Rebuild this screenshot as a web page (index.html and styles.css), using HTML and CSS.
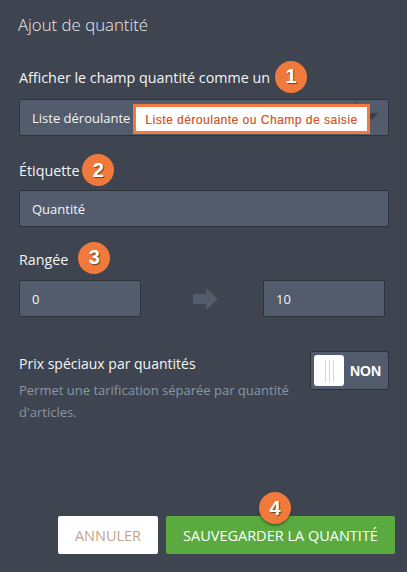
FILE: index.html
```html
<!DOCTYPE html>
<html lang="fr">
<head>
<meta charset="utf-8">
<link rel="stylesheet" href="styles.css">
</head>
<body>
<div class="panel">
  <h1 class="title">Ajout de quantité</h1>

  <div class="label-row row1">
    <span class="label">Afficher le champ quantité comme un</span>
    <span class="badge">1</span>
  </div>
  <div class="select">
    <span class="select-text">Liste déroulante</span>
    <span class="select-btn"><span class="caret"></span></span>
    <div class="tip">Liste déroulante ou Champ de saisie</div>
  </div>

  <div class="label-row row2">
    <span class="label">Étiquette</span>
    <span class="badge">2</span>
  </div>
  <div class="input">Quantité</div>

  <div class="label-row row3">
    <span class="label">Rangée</span>
    <span class="badge">3</span>
  </div>
  <div class="range">
    <div class="input small">0</div>
    <svg class="arrow" width="26" height="22" viewBox="0 0 26 22"><path d="M0 6 H13 V0 L25 11 L13 22 V16 H0 Z" fill="#525c6d"/></svg>
    <div class="input small">10</div>
  </div>

  <div class="special">
    <div class="special-text">
      <div class="special-title">Prix spéciaux par quantités</div>
      <div class="special-desc">Permet une tarification séparée par quantité d'articles.</div>
    </div>
    <div class="toggle">
      <span class="knob"><i></i><i></i><i></i></span>
      <span class="toggle-text">NON</span>
    </div>
  </div>

  <div class="actions">
    <button class="btn cancel">ANNULER</button>
    <button class="btn save">SAUVEGARDER LA QUANTITÉ<span class="badge badge4">4</span></button>
  </div>
</div>
</body>
</html>
```
FILE: styles.css
```css
* { box-sizing: border-box; }
html, body { margin: 0; padding: 0; }
body {
  width: 407px;
  height: 572px;
  background: #3e4550;
  font-family: "Open Sans", "Noto Sans", sans-serif;
  color: #f2f2f2;
  overflow: hidden;
}
.panel {
  display: flex;
  flex-direction: column;
  padding: 0 18px 0 19px;
}
.title {
  margin: 13px 0 0 -1px;
  font-size: 16.8px;
  font-weight: 300;
  line-height: 24px;
  color: #e6e8ea;
}
.label-row {
  display: flex;
  align-items: center;
  height: 32px;
}
.row1 { margin-top: 24px; }
.row2 { margin-top: 18px; }
.row3 { margin-top: 16px; }
.label {
  font-size: 14.3px;
  color: #f4f4f4;
}
.badge {
  width: 32px;
  height: 32px;
  border-radius: 50%;
  background: #f07a3b;
  color: #fff;
  font-family: "Liberation Sans", Arial, sans-serif;
  font-weight: bold;
  font-size: 20px;
  display: flex;
  align-items: center;
  justify-content: center;
  text-shadow: 1px 1px 1px #6a4030;
  flex: none;
}
.row1 .badge { margin-left: 5px; margin-top: -1px; }
.row2 .badge { margin-left: 3px; }
.row3 .badge { margin-left: 10px; margin-top: -3px; }
.select {
  position: relative;
  margin-top: 6px;
  height: 37px;
  background: #525c6d;
  border: 1px solid #2d323a;
  border-radius: 2px;
  display: flex;
  align-items: center;
}
.select-text {
  flex: 1;
  padding-left: 12px;
  font-size: 13px;
  color: #f4f4f4;
}
.select-btn {
  width: 33px;
  align-self: stretch;
  border-left: 1px solid #434a55;
  display: flex;
  align-items: center;
  justify-content: center;
}
.caret {
  width: 0; height: 0;
  border-left: 6px solid transparent;
  border-right: 6px solid transparent;
  border-top: 7px solid #3a3f48;
  margin-top: -2px;
}
.tip {
  position: absolute;
  left: 113px;
  top: 4px;
  width: 237px;
  height: 30px;
  background: #fff;
  border: 3px solid #f27a3a;
  font-family: "Liberation Sans", Arial, sans-serif;
  font-size: 12px;
  color: #d9541e;
  letter-spacing: 0.5px;
  display: flex;
  align-items: center;
  justify-content: center;
  padding-top: 1px;
  text-shadow: 0.3px 0.3px 0 rgba(120,50,20,0.4);
}
.input {
  margin-top: 4px;
  height: 37px;
  background: #525c6d;
  border: 1px solid #2d323a;
  border-radius: 2px;
  padding-left: 12px;
  display: flex;
  align-items: center;
  font-size: 13px;
  color: #f4f4f4;
}
.range {
  margin-top: 5px;
  display: flex;
  align-items: center;
  justify-content: space-between;
  width: 366px;
}
.range .input { margin-top: 0; }
.small { width: 122px; }
.arrow { margin-left: 8px; margin-right: 0; }
.special {
  margin-top: 34px;
  display: flex;
  justify-content: space-between;
  align-items: flex-start;
}
.special-text { width: 290px; margin-top: 1px; }
.special-title {
  font-size: 14px;
  color: #f4f4f4;
  line-height: 24px;
}
.special-desc {
  margin-top: 3px;
  font-size: 13px;
  line-height: 22px;
  color: #8c95a2;
}
.toggle {
  width: 79px;
  height: 39px;
  background: #525c6d;
  border: 1px solid #2d323a;
  border-radius: 3px;
  display: flex;
  align-items: center;
  padding-left: 3px;
}
.knob {
  width: 30px;
  height: 31px;
  background: #fff;
  border-radius: 3px;
  display: flex;
  justify-content: center;
  align-items: center;
  gap: 3px;
}
.knob i {
  display: block;
  width: 1px;
  height: 22px;
  background: #d8d8d8;
}
.toggle-text {
  margin-left: 6px;
  font-family: "Liberation Sans", Arial, sans-serif;
  font-weight: bold;
  font-size: 14px;
  color: #fff;
}
.actions {
  margin-top: 93px;
  display: flex;
  justify-content: flex-end;
  gap: 8px;
  margin-right: -6px;
}
.btn {
  position: relative;
  height: 38px;
  border: none;
  border-radius: 2px;
  font-family: "Open Sans", "Noto Sans", sans-serif;
  font-size: 14.5px;
  padding: 0;
}
.cancel {
  width: 100px;
  background: #fff;
  color: #c3a585;
}
.save {
  width: 229px;
  background: #5aaa40;
  color: #fff;
}
.badge4 {
  position: absolute;
  left: 93px;
  top: -24px;
  box-shadow: 0 2px 2px rgba(0,0,0,0.35);
}
```
